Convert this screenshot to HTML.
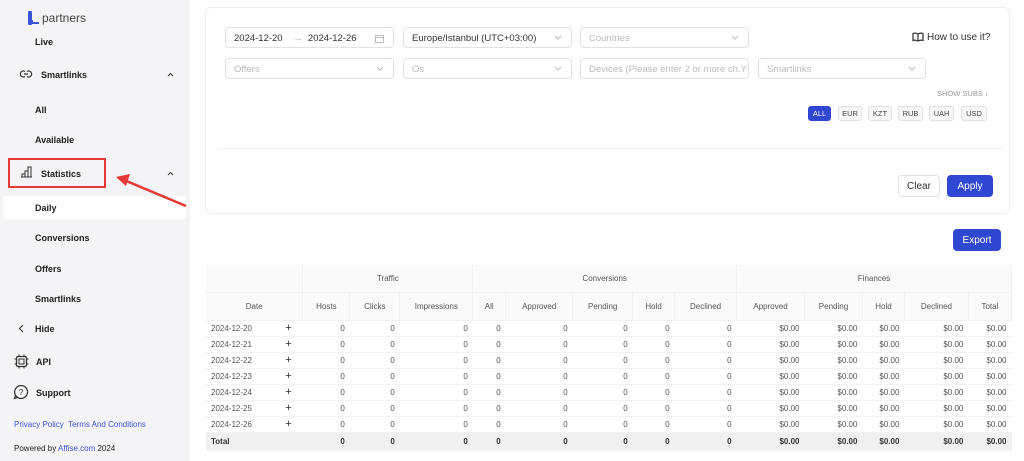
<!DOCTYPE html>
<html><head><meta charset="utf-8"><style>
*{box-sizing:border-box;margin:0;padding:0}
body{width:1024px;height:461px;overflow:hidden;background:#fff;font-family:"Liberation Sans",sans-serif;position:relative;color:#333}
.sb{position:absolute;left:0;top:0;width:190px;height:461px;background:#f4f4f6}
.it{position:absolute;font-size:9px;font-weight:bold;color:#222}
.ab{position:absolute}
.card{position:absolute;left:205px;top:7px;width:805px;height:207px;border:1px solid #eee;border-radius:6px;background:#fff}
.inp{position:absolute;height:21px;border:1px solid #e2e2e2;border-radius:4px;font-size:9.5px;color:#bbb;padding:5px 8px;white-space:nowrap;overflow:hidden}
.inp svg{position:absolute;right:9px;top:7px}
.cur{position:absolute;top:106px;height:15px;border:1px solid #e2e2e2;border-radius:3px;background:#f7f7f7;font-size:7.5px;color:#444;text-align:center;line-height:13px}
.btn{position:absolute;border-radius:4px;font-size:10px;display:flex;align-items:center;justify-content:center}
table{position:absolute;left:206px;top:265px;width:806px;border-collapse:collapse;font-size:8px;color:#555}
td{padding:0 5px;text-align:right;height:16px;border-bottom:1px solid #f2f2f2}
th{font-weight:normal;color:#555;background:#fafafa;border-right:1px solid #f0f0f0;border-bottom:1px solid #f0f0f0}
.g th{height:27px}
.h th{height:28px}
td.d{text-align:left}
td.p{text-align:center;font-size:11px;color:#333}
tr.t td{background:#f0f0f0;font-weight:bold;color:#333;height:18px}
</style></head><body>
<div class="sb">
 <div class="ab" style="left:28px;top:11px;width:4px;height:14px;background:#3b55d9;border-radius:1px"></div>
 <div class="ab" style="left:31px;top:20px;width:8px;height:4px;border-left:2px solid #3b55d9;border-bottom:2px solid #3b55d9"></div>
 <div class="ab" style="left:42px;top:11px;font-size:12px;color:#444">partners</div>
 <div class="it" style="left:35px;top:37px">Live</div>
 <svg class="ab" style="left:19px;top:69px" width="14" height="10"><path d="M6 2.5a3 3 0 1 0 0 5M8 2.5a3 3 0 1 1 0 5M5 5h4" fill="none" stroke="#333" stroke-width="1.2"/></svg>
 <div class="it" style="left:41px;top:70px">Smartlinks</div>
 <svg class="ab" style="left:167px;top:72px" width="7" height="5"><path d="M1 4l2.5-2.5L6 4" fill="none" stroke="#333"/></svg>
 <div class="it" style="left:35px;top:105px">All</div>
 <div class="it" style="left:35px;top:135px">Available</div>
 <svg class="ab" style="left:20px;top:166px" width="13" height="12"><path d="M1 11h11M2 11V8h3v3M5 11V5h3v6M8 11V1h3v10" fill="none" stroke="#333" stroke-width="1"/></svg>
 <div class="it" style="left:41px;top:169px">Statistics</div>
 <svg class="ab" style="left:167px;top:171px" width="7" height="5"><path d="M1 4l2.5-2.5L6 4" fill="none" stroke="#333"/></svg>
 <div class="ab" style="left:8px;top:158px;width:98px;height:30px;border:2px solid #e53935"></div>
 <div class="ab" style="left:3px;top:196px;width:183px;height:23px;background:#fff;border-radius:3px"></div>
 <div class="it" style="left:35px;top:203px">Daily</div>
 <div class="it" style="left:35px;top:233px">Conversions</div>
 <div class="it" style="left:35px;top:264px">Offers</div>
 <div class="it" style="left:35px;top:294px">Smartlinks</div>
 <svg class="ab" style="left:18px;top:324px" width="6" height="9"><path d="M5 1L1.5 4.5L5 8" fill="none" stroke="#333" stroke-width="1.1"/></svg>
 <div class="it" style="left:35px;top:324px">Hide</div>
 <svg class="ab" style="left:14px;top:354px" width="15" height="15"><rect x="2.5" y="2.5" width="10" height="10" rx="1.5" fill="none" stroke="#333" stroke-width="1.3"/><rect x="5" y="5" width="5" height="5" fill="none" stroke="#333"/><path d="M5 0.5v2M10 0.5v2M5 12.5v2M10 12.5v2M0.5 5h2M0.5 10h2M12.5 5h2M12.5 10h2" stroke="#333"/></svg>
 <div class="it" style="left:36px;top:357px">API</div>
 <svg class="ab" style="left:13px;top:384px" width="16" height="16"><path d="M8 1.5a6.5 6.5 0 1 1-5.6 9.8L1.5 14.5l3.2-1A6.5 6.5 0 0 1 8 1.5z" fill="none" stroke="#333" stroke-width="1.2"/><text x="8" y="11" font-size="8" text-anchor="middle" font-family="Liberation Sans" fill="#333">?</text></svg>
 <div class="it" style="left:36px;top:388px">Support</div>
 <div class="ab" style="left:14px;top:420px;font-size:8px;color:#3b55d9">Privacy Policy&nbsp; Terms And Conditions</div>
 <div class="ab" style="left:14px;top:444px;font-size:8px;color:#222">Powered by <span style="color:#3b55d9">Affise.com</span> 2024</div>
</div>
<svg class="ab" style="left:110px;top:170px" width="80" height="40"><path d="M76 36L14 10" stroke="#e53935" stroke-width="2.5"/><path d="M6 7L20 4L16 16Z" fill="#e53935"/></svg>

<div class="card"></div>
<div class="inp" style="left:225px;top:27px;width:169px;color:#333">2024-12-20 &nbsp;&nbsp;&nbsp;<span style="color:#aaa">&rarr;</span>&nbsp; 2024-12-26<svg width="9" height="9" style="top:6px"><rect x="0.5" y="1.5" width="8" height="7" fill="none" stroke="#bbb"/><path d="M0.5 3.5h8" stroke="#bbb"/></svg></div>
<div class="inp" style="left:403px;top:27px;width:169px;color:#333">Europe/Istanbul (UTC+03:00)<svg width="8" height="5"><path d="M1 1l3 3 3-3" fill="none" stroke="#bbb"/></svg></div>
<div class="inp" style="left:580px;top:27px;width:169px">Countries<svg width="8" height="5"><path d="M1 1l3 3 3-3" fill="none" stroke="#bbb"/></svg></div>
<div class="inp" style="left:225px;top:58px;width:169px">Offers<svg width="8" height="5"><path d="M1 1l3 3 3-3" fill="none" stroke="#bbb"/></svg></div>
<div class="inp" style="left:403px;top:58px;width:169px">Os<svg width="8" height="5"><path d="M1 1l3 3 3-3" fill="none" stroke="#bbb"/></svg></div>
<div class="inp" style="left:580px;top:58px;width:169px">Devices (Please enter 2 or more ch.Y</div>
<div class="inp" style="left:758px;top:58px;width:168px">Smartlinks<svg width="8" height="5"><path d="M1 1l3 3 3-3" fill="none" stroke="#bbb"/></svg></div>
<svg class="ab" style="left:912px;top:32px" width="12" height="10"><path d="M6 2C4 1 2 1 1 1.5v7C2 8 4 8 6 9c2-1 4-1 5-0.5v-7C10 1 8 1 6 2zM6 2v7" fill="none" stroke="#333" stroke-width="1.2"/></svg>
<div class="ab" style="left:927px;top:32px;font-size:10px;color:#333">How to use it?</div>
<div class="ab" style="left:937px;top:89px;font-size:7.5px;color:#999">SHOW SUBS &darr;</div>
<div class="cur" style="left:808px;width:23px;background:#2f47d1;border-color:#2f47d1;color:#fff">ALL</div>
<div class="cur" style="left:838px;width:24px">EUR</div>
<div class="cur" style="left:868px;width:24px">KZT</div>
<div class="cur" style="left:898px;width:25px">RUB</div>
<div class="cur" style="left:929px;width:25px">UAH</div>
<div class="cur" style="left:961px;width:26px">USD</div>
<div class="ab" style="left:217px;top:148px;width:787px;height:1px;background:#f0f0f0"></div>
<div class="btn" style="left:898px;top:175px;width:42px;height:22px;border:1px solid #e2e2e2;color:#333">Clear</div>
<div class="btn" style="left:947px;top:175px;width:46px;height:22px;background:#2f47d1;color:#fff">Apply</div>
<div class="btn" style="left:953px;top:229px;width:48px;height:22px;background:#2f47d1;color:#fff">Export</div>

<table>
<colgroup><col style="width:68px"><col style="width:29px"><col style="width:47px"><col style="width:50px"><col style="width:73px"><col style="width:33px"><col style="width:67px"><col style="width:60px"><col style="width:42px"><col style="width:62px"><col style="width:68px"><col style="width:58px"><col style="width:42px"><col style="width:64px"><col style="width:43px"></colgroup>
<tr class="g"><th colspan="2"></th><th colspan="3">Traffic</th><th colspan="5">Conversions</th><th colspan="5">Finances</th></tr>
<tr class="h"><th colspan="2">Date</th><th>Hosts</th><th>Clicks</th><th>Impressions</th><th>All</th><th>Approved</th><th>Pending</th><th>Hold</th><th>Declined</th><th>Approved</th><th>Pending</th><th>Hold</th><th>Declined</th><th>Total</th></tr>
<tr><td class="d">2024-12-20</td><td class="p">+</td><td>0</td><td>0</td><td>0</td><td>0</td><td>0</td><td>0</td><td>0</td><td>0</td><td>$0.00</td><td>$0.00</td><td>$0.00</td><td>$0.00</td><td>$0.00</td></tr>
<tr><td class="d">2024-12-21</td><td class="p">+</td><td>0</td><td>0</td><td>0</td><td>0</td><td>0</td><td>0</td><td>0</td><td>0</td><td>$0.00</td><td>$0.00</td><td>$0.00</td><td>$0.00</td><td>$0.00</td></tr>
<tr><td class="d">2024-12-22</td><td class="p">+</td><td>0</td><td>0</td><td>0</td><td>0</td><td>0</td><td>0</td><td>0</td><td>0</td><td>$0.00</td><td>$0.00</td><td>$0.00</td><td>$0.00</td><td>$0.00</td></tr>
<tr><td class="d">2024-12-23</td><td class="p">+</td><td>0</td><td>0</td><td>0</td><td>0</td><td>0</td><td>0</td><td>0</td><td>0</td><td>$0.00</td><td>$0.00</td><td>$0.00</td><td>$0.00</td><td>$0.00</td></tr>
<tr><td class="d">2024-12-24</td><td class="p">+</td><td>0</td><td>0</td><td>0</td><td>0</td><td>0</td><td>0</td><td>0</td><td>0</td><td>$0.00</td><td>$0.00</td><td>$0.00</td><td>$0.00</td><td>$0.00</td></tr>
<tr><td class="d">2024-12-25</td><td class="p">+</td><td>0</td><td>0</td><td>0</td><td>0</td><td>0</td><td>0</td><td>0</td><td>0</td><td>$0.00</td><td>$0.00</td><td>$0.00</td><td>$0.00</td><td>$0.00</td></tr>
<tr><td class="d">2024-12-26</td><td class="p">+</td><td>0</td><td>0</td><td>0</td><td>0</td><td>0</td><td>0</td><td>0</td><td>0</td><td>$0.00</td><td>$0.00</td><td>$0.00</td><td>$0.00</td><td>$0.00</td></tr>
<tr class="t"><td class="d">Total</td><td></td><td>0</td><td>0</td><td>0</td><td>0</td><td>0</td><td>0</td><td>0</td><td>0</td><td>$0.00</td><td>$0.00</td><td>$0.00</td><td>$0.00</td><td>$0.00</td></tr>
</table>
</body></html>
